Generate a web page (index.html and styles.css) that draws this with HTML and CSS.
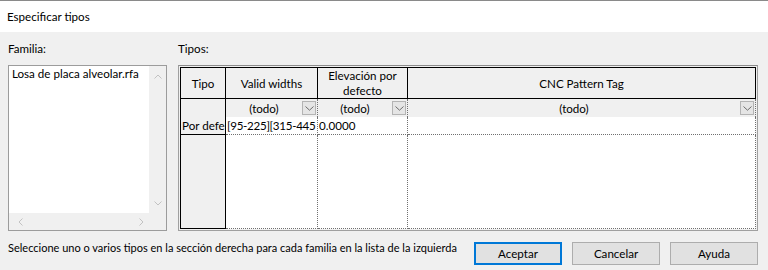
FILE: index.html
```html
<!DOCTYPE html>
<html lang="es">
<head>
    <meta charset="UTF-8">
    <title>Especificar tipos</title>
    <link rel="stylesheet" href="styles.css">
</head>
<body>

    <div class="titlebar">Especificar tipos</div>

    <div class="dialog">
        <div class="panes">
            <div class="family-pane">
                <div class="pane-label">Familia:</div>
                <div class="listbox">
                    <div class="list-area">
                        <div class="list-item">Losa de placa alveolar.rfa</div>
                    </div>
                    <div class="vscroll">
                        <svg width="8" height="5" viewBox="0 0 8 5"><path d="M0.5 4.5 L4 1 L7.5 4.5" fill="none" stroke="#c2c2c2" stroke-width="1"/></svg>
                        <svg width="8" height="5" viewBox="0 0 8 5"><path d="M0.5 0.5 L4 4 L7.5 0.5" fill="none" stroke="#c2c2c2" stroke-width="1"/></svg>
                    </div>
                    <div class="hscroll">
                        <svg width="5" height="8" viewBox="0 0 5 8"><path d="M4.5 0.5 L1 4 L4.5 7.5" fill="none" stroke="#c2c2c2" stroke-width="1"/></svg>
                        <svg width="5" height="8" viewBox="0 0 5 8"><path d="M0.5 0.5 L4 4 L0.5 7.5" fill="none" stroke="#c2c2c2" stroke-width="1"/></svg>
                    </div>
                    <div class="scroll-corner"></div>
                </div>
            </div>

            <div class="types-pane">
                <div class="pane-label">Tipos:</div>
                <div class="grid-frame">
                    <div class="grid">
                        <!-- header -->
                        <div class="hcell">Tipo</div>
                        <div class="hcell">Valid widths</div>
                        <div class="hcell">Elevación por<br>defecto</div>
                        <div class="hcell">CNC Pattern Tag</div>

                        <!-- filters -->
                        <div class="fcell fcell-tipo"></div>
                        <div class="fcell">
                            <span class="fcell-text">(todo)</span>
                            <span class="drop"><svg width="9" height="5" viewBox="0 0 9 5"><path d="M0.5 0.5 L4.5 4.2 L8.5 0.5" fill="none" stroke="#6d6d6d" stroke-width="1"/></svg></span>
                        </div>
                        <div class="fcell">
                            <span class="fcell-text">(todo)</span>
                            <span class="drop"><svg width="9" height="5" viewBox="0 0 9 5"><path d="M0.5 0.5 L4.5 4.2 L8.5 0.5" fill="none" stroke="#6d6d6d" stroke-width="1"/></svg></span>
                        </div>
                        <div class="fcell">
                            <span class="fcell-text">(todo)</span>
                            <span class="drop"><svg width="9" height="5" viewBox="0 0 9 5"><path d="M0.5 0.5 L4.5 4.2 L8.5 0.5" fill="none" stroke="#6d6d6d" stroke-width="1"/></svg></span>
                        </div>

                        <!-- data (cells show only what fits, like the grid does) -->
                        <div class="tcell">Por defe</div>
                        <div class="dcell dcell-tight">[95-225][315-445</div>
                        <div class="dcell">0.0000</div>
                        <div class="dcell"></div>

                        <!-- empty space -->
                        <div class="tcell"></div>
                        <div class="dcell"></div>
                        <div class="dcell"></div>
                        <div class="dcell"></div>
                    </div>
                </div>
            </div>
        </div>

        <div class="footer">
            <div class="hint">Seleccione uno o varios tipos en la sección derecha para cada familia en la lista de la izquierda</div>
            <div class="buttons">
                <button class="btn btn-default">Aceptar</button>
                <button class="btn">Cancelar</button>
                <button class="btn">Ayuda</button>
            </div>
        </div>
    </div>

</body>
</html>
```

FILE: styles.css
```css
body {
    margin: 0;
    font-family: 'Lato', 'Noto Sans', sans-serif;
    font-size: 11.6px;
    color: #000;
    background-color: #f0f0f0;
    width: 768px;
    height: 270px;
    overflow: hidden;
}

.titlebar {
    height: 31px;
    border-top: 1px solid #8a8a8a;
    background-color: #ffffff;
    display: flex;
    align-items: center;
    padding-left: 7px;
}

.dialog {
    padding: 9px 10px 0 8px;
}

.panes {
    display: flex;
    gap: 11px;
}

.pane-label {
    line-height: 15px;
    margin-bottom: 9px;
}

.family-pane {
    width: 159px;
}

.listbox {
    box-sizing: border-box;
    height: 166px;
    border: 1px solid #9c9c9c;
    background-color: #ffffff;
    display: grid;
    grid-template-columns: 1fr 17px;
    grid-template-rows: 1fr 17px;
}

.list-item {
    padding: 1px 3px;
    line-height: 14px;
    white-space: nowrap;
}

.vscroll {
    background-color: #f0f0f0;
    display: flex;
    flex-direction: column;
    justify-content: space-between;
    align-items: center;
    padding: 8px 0 7px;
}

.hscroll {
    background-color: #f0f0f0;
    display: flex;
    justify-content: space-between;
    align-items: center;
    padding: 0 5px 0 9px;
}

.scroll-corner {
    background-color: #f0f0f0;
}

.types-pane {
    width: 580px;
}

.grid-frame {
    box-sizing: border-box;
    height: 166px;
    border: 1px solid #a0a0a0;
    border-top-color: #8c8c8c;
    padding: 1px;
}

.grid {
    display: grid;
    grid-template-columns: 45px 92px 90px 348px;
    grid-template-rows: 31px 18px 18px 94px;
    border-left: 1px solid #000;
    border-top: 1px solid #000;
    background-color: #ffffff;
}

.hcell {
    background-color: #f0f0f0;
    border-right: 1px solid #000;
    border-bottom: 1px solid #000;
    display: flex;
    align-items: center;
    justify-content: center;
    text-align: center;
    line-height: 15px;
}

.fcell {
    background-color: #f0f0f0;
    border-right: 1px dotted #707070;
    display: flex;
    align-items: center;
}

.fcell-tipo {
    border-right: 1px solid #000;
}

.fcell-text {
    flex: 1;
    text-align: center;
}

.drop {
    box-sizing: border-box;
    width: 14px;
    height: 14px;
    margin-right: 1px;
    border: 1px solid #b4b4b4;
    background-color: #e5e5e5;
    display: flex;
    align-items: center;
    justify-content: center;
}

.tcell {
    background-color: #f0f0f0;
    border-right: 1px solid #000;
    border-bottom: 1px solid #000;
    padding-left: 1px;
    line-height: 17px;
    white-space: nowrap;
    overflow: hidden;
}

.dcell {
    border-right: 1px dotted #707070;
    border-bottom: 1px dotted #707070;
    padding-left: 1px;
    line-height: 17px;
    white-space: nowrap;
    overflow: hidden;
}

.dcell-tight {
    letter-spacing: -0.3px;
}

.footer {
    display: flex;
    align-items: flex-start;
    margin-top: 9px;
}

.hint {
    flex: 1;
    min-width: 0;
    line-height: 15px;
    white-space: nowrap;
    font-size: 11px;
}

.buttons {
    display: flex;
    flex-shrink: 0;
    gap: 10px;
    margin-top: 2px;
}

.btn {
    box-sizing: border-box;
    width: 88px;
    height: 23px;
    border: 1px solid #adadad;
    background-color: #e1e1e1;
    font-family: inherit;
    font-size: 11.6px;
    color: #000;
    padding: 0;
}

.btn-default {
    border: 2px solid #0078d7;
}
```
